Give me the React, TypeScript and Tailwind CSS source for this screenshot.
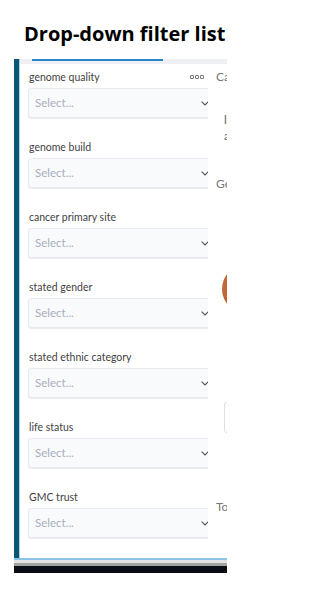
import React from "react";

const fields = [
  { label: "genome quality", dots: true },
  { label: "genome build" },
  { label: "cancer primary site" },
  { label: "stated gender" },
  { label: "stated ethnic category" },
  { label: "life status" },
  { label: "GMC trust" },
];

function Chevron() {
  return (
    <svg width="8" height="5" viewBox="0 0 8 5" className="shrink-0">
      <path d="M0.6 0.7 L4 4 L7.4 0.7" fill="none" stroke="#555" strokeWidth="1.1" />
    </svg>
  );
}

function Dots() {
  return (
    <div className="flex gap-[1px] items-center">
      {[0, 1, 2].map((i) => (
        <div key={i} className="w-[4px] h-[4px] border border-[#777] rounded-[1px]" />
      ))}
    </div>
  );
}

export default function App() {
  return (
    <div className="w-[320px] h-[608px] bg-white" style={{ fontFamily: "Lato, 'Open Sans', sans-serif" }}>
      <div className="pt-[20px] pl-[24px] h-[59px]">
        <div
          className="text-[20px] leading-[27px] font-bold text-black whitespace-nowrap"
          style={{ fontFamily: "'Open Sans', sans-serif" }}
        >
          Drop-down filter list
        </div>
      </div>
      <div className="ml-[14px] w-[213px] overflow-hidden">
        <div className="flex">
          <div className="w-[5px] shrink-0 bg-[#0b5673]" />
          <div className="w-px shrink-0 bg-[#a9d0ea]" />
          <div className="w-[207px] shrink-0 min-w-0 flex flex-col">
            <div className="h-[5px] bg-[#eef0f3] relative">
              <div className="absolute left-[12px] top-0 w-[131px] h-[2px] bg-[#2b83c6]" />
            </div>
            <div className="flex">
              <div className="w-[188px] shrink-0 overflow-hidden pt-[6px] pb-[20px] pl-[8px]">
                {fields.map((f) => (
                  <div key={f.label} className="mb-[22px] last:mb-0">
                    <div className="flex items-center justify-between h-[14px] pl-[1px] pr-[4px]">
                      <span className="text-[10.5px] leading-[14px] text-[#3f3f3f]">{f.label}</span>
                      {f.dots && <Dots />}
                    </div>
                    <div className="mt-[4px] w-[190px] h-[30px] bg-[#f9fafc] border border-[#e6e9ee] rounded-[3px] shadow-[0_1px_1px_rgba(0,0,0,0.08)] flex items-center pl-[6px]">
                      <span className="text-[11.5px] text-[#a7afbd] w-[166px]">Select...</span>
                      <Chevron />
                    </div>
                  </div>
                ))}
              </div>
              <div className="w-[19px] shrink-0 overflow-hidden flex flex-col text-[12px] text-[#777] whitespace-nowrap">
                <div className="mt-[6px] pl-[8px] leading-[14px]">Ca</div>
                <div className="mt-[28px] pl-[16px] leading-[16px] text-[#666]">l</div>
                <div className="pl-[16px] leading-[16px] text-[#666]">a</div>
                <div className="mt-[33px] pl-[8px] leading-[14px]">Ge</div>
                <div className="mt-[74px] ml-[14px] w-[48px] h-[48px] rounded-full bg-[#c5653a] shrink-0" />
                <div className="mt-[89px] ml-[16px] w-[30px] h-[31px] border border-[#dcdfe4] rounded-[3px] shrink-0" />
                <div className="mt-[67px] pl-[8px] leading-[14px]">To</div>
              </div>
            </div>
          </div>
        </div>
        <div className="h-[2px] bg-[#8ec3e8]" />
        <div className="h-[3px] bg-[#e3e3e3]" />
        <div className="h-[3px] bg-[#a3a3a3]" />
        <div className="h-[7px] bg-[#0a0d13]" />
      </div>
    </div>
  );
}
